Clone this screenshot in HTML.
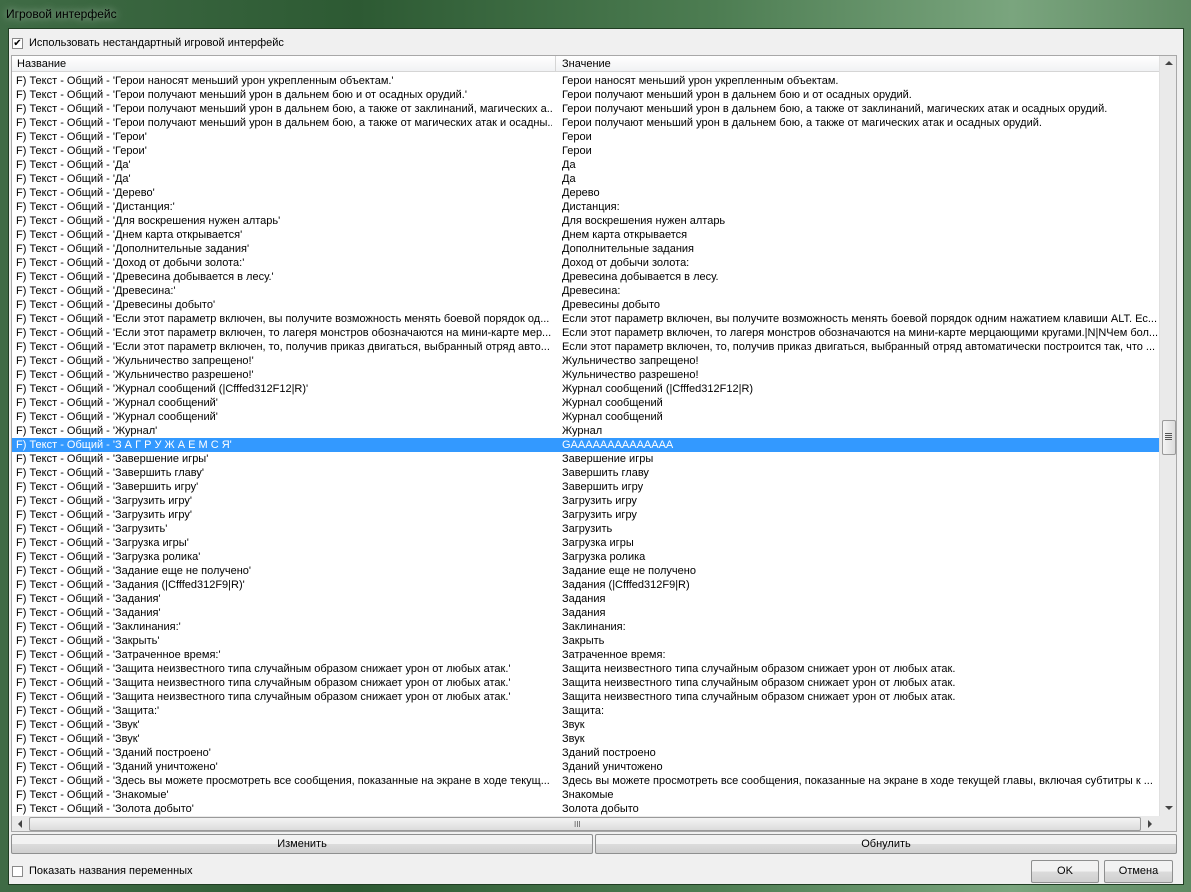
<!DOCTYPE html>
<html><head><meta charset="utf-8"><style>
*{margin:0;padding:0;box-sizing:border-box}
body{width:1191px;height:892px;overflow:hidden;background:linear-gradient(90deg,#3f6b45,#2d5a33 30%,#4d7d52 60%,#7aa57e 85%,#5f8a63);font-family:"Liberation Sans",sans-serif;font-size:11px;color:#000;position:relative}
.title{position:absolute;left:6px;top:7px;font-size:12px;color:#000;text-shadow:0 0 8px rgba(255,255,255,.7)}
.client{position:absolute;left:8px;top:28px;width:1176px;height:857px;background:#f0f0f0;border:1px solid #1f3d22}
.abs{position:absolute}
.cb{position:absolute;width:11px;height:11px;border:1px solid #8a8a8a;background:#fff}
.list{position:absolute;left:2px;top:26px;width:1166px;height:777px;border:1px solid #a8a8a8;background:#fff;overflow:hidden}
.hdr{position:absolute;left:0;top:0;width:1147px;height:16px;background:linear-gradient(#fff,#f1f2f4);border-bottom:1px solid #d5d5d5}
.hdr span{position:absolute;top:2px}
.rows{position:absolute;left:0;top:18px;width:1147px}
.r{height:14px;line-height:14px;white-space:nowrap;position:relative}
.r .a{position:absolute;left:4px;width:536px;overflow:hidden}
.r .b{position:absolute;left:550px;width:596px;overflow:hidden}
.r.s{background:#3399ff;color:#fff}
.vs{position:absolute;left:1147px;top:0;width:17px;height:760px;background:#eaeaea;border-left:1px solid #e0e0e0}
.hs{position:absolute;left:0;top:760px;width:1147px;height:16px;background:#eaeaea}
.btn{position:absolute;border:1px solid #8e8f8f;border-radius:2px;background:linear-gradient(#f2f2f2 50%,#dcdcdc 50%,#cfcfcf);text-align:center;line-height:18px}
</style></head><body>
<div class="title">Игровой интерфейс</div>
<div class="client">
<div class="cb" style="left:3px;top:9px;font-size:10px;line-height:9px;text-align:center">✔</div>
<div class="abs" style="left:20px;top:8px">Использовать нестандартный игровой интерфейс</div>
<div class="list">
<div class="hdr"><span style="left:5px">Название</span><span style="left:550px">Значение</span><div class="abs" style="left:543px;top:0;width:1px;height:16px;background:#d5d5d5"></div></div>
<div class="rows">
<div class="r"><span class="a">F) Текст - Общий - 'Герои наносят меньший урон укрепленным объектам.'</span><span class="b">Герои наносят меньший урон укрепленным объектам.</span></div>
<div class="r"><span class="a">F) Текст - Общий - 'Герои получают меньший урон в дальнем бою и от осадных орудий.'</span><span class="b">Герои получают меньший урон в дальнем бою и от осадных орудий.</span></div>
<div class="r"><span class="a">F) Текст - Общий - 'Герои получают меньший урон в дальнем бою, а также от заклинаний, магических а...</span><span class="b">Герои получают меньший урон в дальнем бою, а также от заклинаний, магических атак и осадных орудий.</span></div>
<div class="r"><span class="a">F) Текст - Общий - 'Герои получают меньший урон в дальнем бою, а также от магических атак и осадны...</span><span class="b">Герои получают меньший урон в дальнем бою, а также от магических атак и осадных орудий.</span></div>
<div class="r"><span class="a">F) Текст - Общий - 'Герои'</span><span class="b">Герои</span></div>
<div class="r"><span class="a">F) Текст - Общий - 'Герои'</span><span class="b">Герои</span></div>
<div class="r"><span class="a">F) Текст - Общий - 'Да'</span><span class="b">Да</span></div>
<div class="r"><span class="a">F) Текст - Общий - 'Да'</span><span class="b">Да</span></div>
<div class="r"><span class="a">F) Текст - Общий - 'Дерево'</span><span class="b">Дерево</span></div>
<div class="r"><span class="a">F) Текст - Общий - 'Дистанция:'</span><span class="b">Дистанция:</span></div>
<div class="r"><span class="a">F) Текст - Общий - 'Для воскрешения нужен алтарь'</span><span class="b">Для воскрешения нужен алтарь</span></div>
<div class="r"><span class="a">F) Текст - Общий - 'Днем карта открывается'</span><span class="b">Днем карта открывается</span></div>
<div class="r"><span class="a">F) Текст - Общий - 'Дополнительные задания'</span><span class="b">Дополнительные задания</span></div>
<div class="r"><span class="a">F) Текст - Общий - 'Доход от добычи золота:'</span><span class="b">Доход от добычи золота:</span></div>
<div class="r"><span class="a">F) Текст - Общий - 'Древесина добывается в лесу.'</span><span class="b">Древесина добывается в лесу.</span></div>
<div class="r"><span class="a">F) Текст - Общий - 'Древесина:'</span><span class="b">Древесина:</span></div>
<div class="r"><span class="a">F) Текст - Общий - 'Древесины добыто'</span><span class="b">Древесины добыто</span></div>
<div class="r"><span class="a">F) Текст - Общий - 'Если этот параметр включен, вы получите возможность менять боевой порядок од...</span><span class="b">Если этот параметр включен, вы получите возможность менять боевой порядок одним нажатием клавиши ALT. Ес...</span></div>
<div class="r"><span class="a">F) Текст - Общий - 'Если этот параметр включен, то лагеря монстров обозначаются на мини-карте мер...</span><span class="b">Если этот параметр включен, то лагеря монстров обозначаются на мини-карте мерцающими кругами.|N|NЧем бол...</span></div>
<div class="r"><span class="a">F) Текст - Общий - 'Если этот параметр включен, то, получив приказ двигаться, выбранный отряд авто...</span><span class="b">Если этот параметр включен, то, получив приказ двигаться, выбранный отряд автоматически построится так, что ...</span></div>
<div class="r"><span class="a">F) Текст - Общий - 'Жульничество запрещено!'</span><span class="b">Жульничество запрещено!</span></div>
<div class="r"><span class="a">F) Текст - Общий - 'Жульничество разрешено!'</span><span class="b">Жульничество разрешено!</span></div>
<div class="r"><span class="a">F) Текст - Общий - 'Журнал сообщений (|Cfffed312F12|R)'</span><span class="b">Журнал сообщений (|Cfffed312F12|R)</span></div>
<div class="r"><span class="a">F) Текст - Общий - 'Журнал сообщений'</span><span class="b">Журнал сообщений</span></div>
<div class="r"><span class="a">F) Текст - Общий - 'Журнал сообщений'</span><span class="b">Журнал сообщений</span></div>
<div class="r"><span class="a">F) Текст - Общий - 'Журнал'</span><span class="b">Журнал</span></div>
<div class="r s"><span class="a">F) Текст - Общий - 'З А Г Р У Ж А Е М С Я'</span><span class="b">GAAAAAAAAAAAAAA</span></div>
<div class="r"><span class="a">F) Текст - Общий - 'Завершение игры'</span><span class="b">Завершение игры</span></div>
<div class="r"><span class="a">F) Текст - Общий - 'Завершить главу'</span><span class="b">Завершить главу</span></div>
<div class="r"><span class="a">F) Текст - Общий - 'Завершить игру'</span><span class="b">Завершить игру</span></div>
<div class="r"><span class="a">F) Текст - Общий - 'Загрузить игру'</span><span class="b">Загрузить игру</span></div>
<div class="r"><span class="a">F) Текст - Общий - 'Загрузить игру'</span><span class="b">Загрузить игру</span></div>
<div class="r"><span class="a">F) Текст - Общий - 'Загрузить'</span><span class="b">Загрузить</span></div>
<div class="r"><span class="a">F) Текст - Общий - 'Загрузка игры'</span><span class="b">Загрузка игры</span></div>
<div class="r"><span class="a">F) Текст - Общий - 'Загрузка ролика'</span><span class="b">Загрузка ролика</span></div>
<div class="r"><span class="a">F) Текст - Общий - 'Задание еще не получено'</span><span class="b">Задание еще не получено</span></div>
<div class="r"><span class="a">F) Текст - Общий - 'Задания (|Cfffed312F9|R)'</span><span class="b">Задания (|Cfffed312F9|R)</span></div>
<div class="r"><span class="a">F) Текст - Общий - 'Задания'</span><span class="b">Задания</span></div>
<div class="r"><span class="a">F) Текст - Общий - 'Задания'</span><span class="b">Задания</span></div>
<div class="r"><span class="a">F) Текст - Общий - 'Заклинания:'</span><span class="b">Заклинания:</span></div>
<div class="r"><span class="a">F) Текст - Общий - 'Закрыть'</span><span class="b">Закрыть</span></div>
<div class="r"><span class="a">F) Текст - Общий - 'Затраченное время:'</span><span class="b">Затраченное время:</span></div>
<div class="r"><span class="a">F) Текст - Общий - 'Защита неизвестного типа случайным образом снижает урон от любых атак.'</span><span class="b">Защита неизвестного типа случайным образом снижает урон от любых атак.</span></div>
<div class="r"><span class="a">F) Текст - Общий - 'Защита неизвестного типа случайным образом снижает урон от любых атак.'</span><span class="b">Защита неизвестного типа случайным образом снижает урон от любых атак.</span></div>
<div class="r"><span class="a">F) Текст - Общий - 'Защита неизвестного типа случайным образом снижает урон от любых атак.'</span><span class="b">Защита неизвестного типа случайным образом снижает урон от любых атак.</span></div>
<div class="r"><span class="a">F) Текст - Общий - 'Защита:'</span><span class="b">Защита:</span></div>
<div class="r"><span class="a">F) Текст - Общий - 'Звук'</span><span class="b">Звук</span></div>
<div class="r"><span class="a">F) Текст - Общий - 'Звук'</span><span class="b">Звук</span></div>
<div class="r"><span class="a">F) Текст - Общий - 'Зданий построено'</span><span class="b">Зданий построено</span></div>
<div class="r"><span class="a">F) Текст - Общий - 'Зданий уничтожено'</span><span class="b">Зданий уничтожено</span></div>
<div class="r"><span class="a">F) Текст - Общий - 'Здесь вы можете просмотреть все сообщения, показанные на экране в ходе текущ...</span><span class="b">Здесь вы можете просмотреть все сообщения, показанные на экране в ходе текущей главы, включая субтитры к ...</span></div>
<div class="r"><span class="a">F) Текст - Общий - 'Знакомые'</span><span class="b">Знакомые</span></div>
<div class="r"><span class="a">F) Текст - Общий - 'Золота добыто'</span><span class="b">Золота добыто</span></div>
</div>
<div class="vs">
<div class="abs" style="left:5px;top:5px;width:0;height:0;border-left:4px solid transparent;border-right:4px solid transparent;border-bottom:4px solid #444"></div>
<div class="abs" style="left:2px;top:364px;width:14px;height:35px;border:1px solid #9a9a9a;border-radius:2px;background:linear-gradient(90deg,#f4f4f4,#dcdcdc)"></div>
<div class="abs" style="left:5px;top:377px;width:7px;height:1px;background:#555;box-shadow:0 2px 0 #555,0 4px 0 #555,0 6px 0 #555"></div>
<div class="abs" style="left:5px;top:750px;width:0;height:0;border-left:4px solid transparent;border-right:4px solid transparent;border-top:4px solid #444"></div>
</div>
<div class="hs">
<div class="abs" style="left:6px;top:4px;width:0;height:0;border-top:4px solid transparent;border-bottom:4px solid transparent;border-right:4px solid #444"></div>
<div class="abs" style="left:17px;top:1px;width:1112px;height:14px;border:1px solid #9a9a9a;border-radius:2px;background:linear-gradient(#f4f4f4,#dcdcdc)"></div>
<div class="abs" style="left:562px;top:4px;font-size:8px;color:#555">III</div>
<div class="abs" style="left:1136px;top:4px;width:0;height:0;border-top:4px solid transparent;border-bottom:4px solid transparent;border-left:4px solid #444"></div>
</div>
<div class="abs" style="left:1147px;top:760px;width:17px;height:16px;background:#eaeaea"></div>
</div>
<div class="btn" style="left:2px;top:805px;width:582px;height:20px">Изменить</div>
<div class="btn" style="left:586px;top:805px;width:582px;height:20px">Обнулить</div>
<div class="cb" style="left:3px;top:837px"></div>
<div class="abs" style="left:20px;top:836px">Показать названия переменных</div>
<div class="btn" style="left:1022px;top:831px;width:68px;height:23px;line-height:21px">OK</div>
<div class="btn" style="left:1095px;top:831px;width:69px;height:23px;line-height:21px">Отмена</div>
</div>
</body></html>
